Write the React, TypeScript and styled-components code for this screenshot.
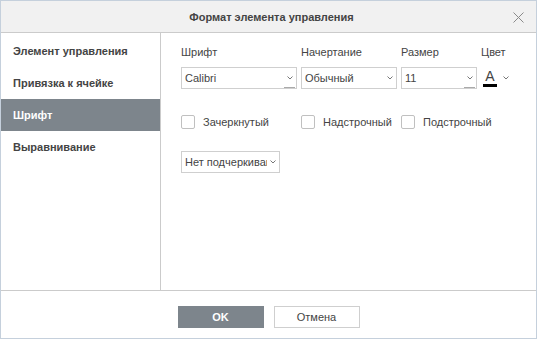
import styled, { createGlobalStyle } from 'styled-components'

const GlobalStyle = createGlobalStyle`
  html, body {
    margin: 0;
    padding: 0;
    background: #fff;
  }
  * {
    box-sizing: border-box;
  }
`

const Window = styled.div`
  width: 537px;
  height: 339px;
  display: flex;
  flex-direction: column;
  border: 1px solid #c5d0dc;
  font-family: 'Liberation Sans', Arial, sans-serif;
  font-size: 11px;
  color: #444;
  background: #fff;
`

const TitleBar = styled.div`
  position: relative;
  height: 32px;
  flex-shrink: 0;
  display: flex;
  align-items: center;
  justify-content: center;
  background: #f1f1f1;
  border-bottom: 1px solid #cbcbcb;
`

const Title = styled.div`
  font-weight: bold;
  font-size: 11px;
  color: #444;
  margin-left: 6px;
`

const CloseButton = styled.button`
  position: absolute;
  right: 12px;
  top: 10px;
  width: 12px;
  height: 12px;
  padding: 0;
  border: none;
  background: transparent;
  display: flex;
  align-items: center;
  justify-content: center;
`

const Body = styled.div`
  flex: 1;
  display: flex;
  min-height: 0;
`

const Sidebar = styled.div`
  width: 160px;
  flex-shrink: 0;
  border-right: 1px solid #cbcbcb;
  padding-top: 2px;
  display: flex;
  flex-direction: column;
`

const NavItem = styled.div<{ $active?: boolean }>`
  height: 32px;
  display: flex;
  align-items: center;
  padding-left: 12px;
  font-weight: bold;
  color: ${p => (p.$active ? '#fff' : '#444')};
  background: ${p => (p.$active ? '#7d858c' : 'transparent')};
`

const Content = styled.div`
  flex: 1;
  padding: 13px 0 0 20px;
  display: flex;
  flex-direction: column;
`

const Grid = styled.div`
  display: grid;
  grid-template-columns: 116px 96px 76px auto;
  column-gap: 4px;
  row-gap: 8px;
  align-items: center;
`

const Label = styled.div`
  line-height: 13px;
`

const Combo = styled.div<{ $width?: number }>`
  height: 22px;
  width: ${p => (p.$width ? `${p.$width}px` : 'auto')};
  border: 1px solid #cfcfcf;
  display: flex;
  align-items: center;
  padding-left: 3px;
  white-space: nowrap;
  overflow: hidden;
  color: #444;
`

const ComboText = styled.span`
  flex: 1;
  overflow: hidden;
  white-space: nowrap;
  text-overflow: clip;
`

const Chevron = styled.span<{ $underline?: boolean }>`
  width: 11px;
  height: 20px;
  flex-shrink: 0;
  display: flex;
  align-items: center;
  justify-content: center;
  border-bottom: ${p => (p.$underline ? '1px solid #aaa' : 'none')};
  margin-right: 1px;
`

const ColorPicker = styled.div`
  display: flex;
  align-items: center;
  gap: 6px;
  margin-left: 2px;
  height: 22px;
`

const ColorGlyph = styled.div`
  display: flex;
  flex-direction: column;
  align-items: center;
  width: 14px;
`

const ColorLetter = styled.span`
  font-size: 14px;
  line-height: 13px;
  color: #444;
`

const ColorBar = styled.span`
  width: 14px;
  height: 3px;
  background: #000;
  margin-top: 1px;
`

const CheckRow = styled.div`
  display: grid;
  grid-template-columns: 120px 100px auto;
  margin-top: 26px;
  align-items: center;
`

const CheckItem = styled.label`
  display: flex;
  align-items: center;
  gap: 8px;
`

const CheckBox = styled.span`
  width: 14px;
  height: 14px;
  border: 1px solid #c0c0c0;
  border-radius: 2px;
  background: #fff;
`

const UnderlineRow = styled.div`
  margin-top: 22px;
`

const Footer = styled.div`
  height: 48px;
  flex-shrink: 0;
  border-top: 1px solid #cbcbcb;
  display: flex;
  justify-content: center;
  align-items: flex-start;
  padding-top: 15px;
  gap: 10px;
`

const Button = styled.button<{ $primary?: boolean }>`
  width: 86px;
  height: 22px;
  font-family: 'Liberation Sans', Arial, sans-serif;
  font-size: 11px;
  font-weight: ${p => (p.$primary ? 'bold' : 'normal')};
  color: ${p => (p.$primary ? '#fff' : '#444')};
  background: ${p => (p.$primary ? '#7d858c' : '#fff')};
  border: 1px solid ${p => (p.$primary ? '#7d858c' : '#cfcfcf')};
  padding: 0;
`

const ChevronIcon = () => (
  <svg width="6" height="4" viewBox="0 0 6 4">
    <path d="M0.5 0.5 L3 3 L5.5 0.5" fill="none" stroke="#777" strokeWidth="1" />
  </svg>
)

export default function App() {
  return (
    <>
      <GlobalStyle />
      <Window>
        <TitleBar>
          <Title>Формат элемента управления</Title>
          <CloseButton>
            <svg width="11" height="11" viewBox="0 0 11 11">
              <path d="M0.5 0.5 L10.5 10.5 M10.5 0.5 L0.5 10.5" stroke="#8a8a8a" strokeWidth="1" />
            </svg>
          </CloseButton>
        </TitleBar>
        <Body>
          <Sidebar>
            <NavItem>Элемент управления</NavItem>
            <NavItem>Привязка к ячейке</NavItem>
            <NavItem $active>Шрифт</NavItem>
            <NavItem>Выравнивание</NavItem>
          </Sidebar>
          <Content>
            <Grid>
              <Label>Шрифт</Label>
              <Label>Начертание</Label>
              <Label>Размер</Label>
              <Label>Цвет</Label>
              <Combo>
                <ComboText>Calibri</ComboText>
                <Chevron $underline>
                  <ChevronIcon />
                </Chevron>
              </Combo>
              <Combo>
                <ComboText>Обычный</ComboText>
                <Chevron>
                  <ChevronIcon />
                </Chevron>
              </Combo>
              <Combo>
                <ComboText>11</ComboText>
                <Chevron $underline>
                  <ChevronIcon />
                </Chevron>
              </Combo>
              <ColorPicker>
                <ColorGlyph>
                  <ColorLetter>A</ColorLetter>
                  <ColorBar />
                </ColorGlyph>
                <ChevronIcon />
              </ColorPicker>
            </Grid>
            <CheckRow>
              <CheckItem>
                <CheckBox />
                Зачеркнутый
              </CheckItem>
              <CheckItem>
                <CheckBox />
                Надстрочный
              </CheckItem>
              <CheckItem>
                <CheckBox />
                Подстрочный
              </CheckItem>
            </CheckRow>
            <UnderlineRow>
              <Combo $width={99}>
                <ComboText>Нет подчеркивания</ComboText>
                <Chevron>
                  <ChevronIcon />
                </Chevron>
              </Combo>
            </UnderlineRow>
          </Content>
        </Body>
        <Footer>
          <Button $primary>OK</Button>
          <Button>Отмена</Button>
        </Footer>
      </Window>
    </>
  )
}
